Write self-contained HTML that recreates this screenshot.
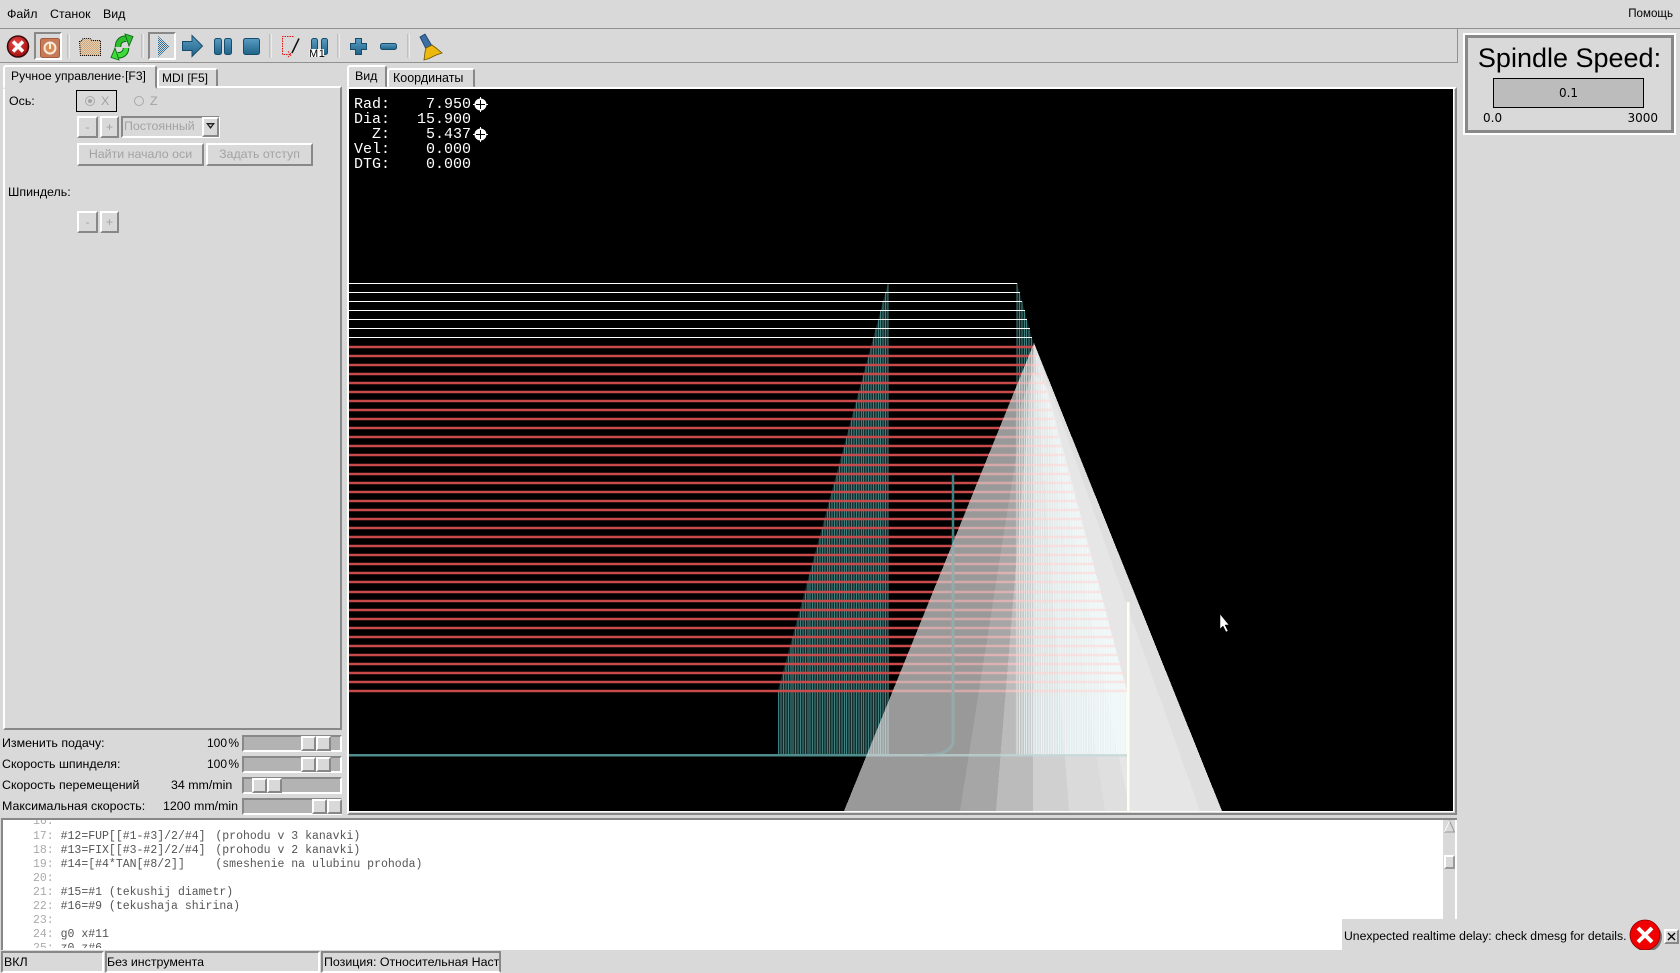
<!DOCTYPE html>
<html lang="ru"><head><meta charset="utf-8"><title>LinuxCNC</title>
<style>
html,body{margin:0;padding:0;background:#d9d9d9;width:1680px;height:973px;overflow:hidden}
body{position:relative;font:12.4px/14px "Liberation Sans",sans-serif;color:#000}
.a{position:absolute;white-space:pre;box-sizing:border-box}
.r{border:2px solid;border-color:#fff #888 #888 #fff;background:#d9d9d9}
.s{border:2px solid;border-color:#888 #fff #fff #888}
.d{color:#a3a3a3;text-align:center}
.t{background:#b3b3b3;border:2px solid;border-color:#888 #fff #fff #888}
.th{position:absolute;top:-1px;height:15px;width:15px;border:2px solid;border-color:#fff #888 #888 #fff;background:#d9d9d9;box-sizing:border-box}
.c{font:11.5px/14px "Liberation Mono",monospace;color:#555;left:30px}
.c i{font-style:normal;color:#aaa}
.c b{font-weight:normal;margin-left:-4px}
.dro{font:15px/15px "Liberation Mono",monospace;color:#fff;left:354px}
</style></head><body>

<!-- menu -->
<div class="a" style="left:7px;top:7px">Файл</div>
<div class="a" style="left:50px;top:7px">Станок</div>
<div class="a" style="left:103px;top:7px">Вид</div>
<div class="a" style="right:7px;top:7px;font-size:11.6px">Помощь</div>
<div class="a" style="left:0;top:28px;width:1680px;height:1px;background:#909090"></div>
<div class="a" style="left:0;top:62px;width:1458px;height:1px;background:#909090"></div>
<div class="a" style="left:1457px;top:29px;width:1px;height:34px;background:#909090"></div>

<!-- toolbar -->
<div class="a" style="left:34px;top:32px;width:28px;height:28px;border:2px solid;border-color:#888 #fff #fff #888"></div>
<div class="a" style="left:148px;top:32px;width:28px;height:28px;border:2px solid;border-color:#888 #fff #fff #888"></div>
<svg class="a" style="left:0;top:28px" width="460" height="36" viewBox="0 28 460 36">
<defs>
<pattern id="dt" width="2" height="2" patternUnits="userSpaceOnUse"><rect width="2" height="2" fill="#e2d2b8"/><rect width="1" height="1" fill="#cfa478"/><rect x="1" y="1" width="1" height="1" fill="#cfa478"/></pattern>
<pattern id="db" width="2" height="2" patternUnits="userSpaceOnUse"><rect width="2" height="2" fill="#d9d9d9"/><rect width="1" height="1" fill="#2f6f9a"/><rect x="1" y="1" width="1" height="1" fill="#2f6f9a"/></pattern>
<linearGradient id="bl" x1="0" y1="0" x2="0" y2="1"><stop offset="0" stop-color="#5a9cc2"/><stop offset="1" stop-color="#1f6389"/></linearGradient>
<radialGradient id="rd" cx=".4" cy=".35" r=".7"><stop offset="0" stop-color="#ea4a4a"/><stop offset="1" stop-color="#a00c0c"/></radialGradient>
</defs>
<g stroke="#a8a8a8" stroke-width="1"><path d="M68 34V58M142 34V58M270 34V58M338 34V58M408 34V58"/></g>
<g stroke="#fff" stroke-width="1"><path d="M69 34V58M143 34V58M271 34V58M339 34V58M409 34V58"/></g>
<circle cx="18" cy="46.500" r="10.500" fill="url(#rd)" stroke="#3a0a0a" stroke-width="1.500"/>
<path d="M13 41.500L23 51.500M23 41.500L13 51.500" stroke="#fff" stroke-width="3.500"/>
<rect x="40.500" y="38.500" width="19" height="19" rx="2" fill="#c67a58" stroke="#a55a3a"/>
<circle cx="50" cy="48" r="5.500" fill="#d98a4e" stroke="#f6ebe0" stroke-width="2"/>
<path d="M50 43V49" stroke="#f6ebe0" stroke-width="2"/>
<path d="M79.500 41.500H81L83 38.500H90L92 40.500H100.500V55.500H80.500Z" fill="url(#dt)" stroke="#000" stroke-width="1" stroke-dasharray="1 1"/>
<path d="M118 47C118 41 122 38 127 39" fill="none" stroke="#0d6a15" stroke-width="6.500"/>
<path d="M118 47C118 41 122 38 127 39" fill="none" stroke="#2fc02f" stroke-width="4.500"/>
<path d="M125 34L133 36.500L129 46Z" fill="#2fc02f" stroke="#0d6a15" stroke-width=".9"/>
<path d="M126 48C126 53 122 56 117 55" fill="none" stroke="#0d6a15" stroke-width="6.500"/>
<path d="M126 48C126 53 122 56 117 55" fill="none" stroke="#3edc38" stroke-width="4.500"/>
<path d="M119 60L111 57.500L115 48Z" fill="#3edc38" stroke="#0d6a15" stroke-width=".9"/>
<path d="M158 36L170 46.500L158 57Z" fill="url(#db)"/>
<path d="M182.500 41.500H192V35.500L202.500 46L192 56.500V50.500H182.500Z" fill="url(#bl)" stroke="#184c6c"/>
<rect x="214.500" y="38.500" width="7" height="16" rx="2" fill="url(#bl)" stroke="#184c6c"/>
<rect x="224.500" y="38.500" width="7" height="16" rx="2" fill="url(#bl)" stroke="#184c6c"/>
<rect x="243.500" y="38.500" width="16" height="16" rx="2" fill="url(#bl)" stroke="#184c6c"/>
<path d="M293.500 36.500H282.500V54.500H291M288 51.500L291.500 54.500L288 57" fill="none" stroke="#e01010" stroke-dasharray="1.500 1"/>
<path d="M299 38.500L292 53" stroke="#111" stroke-width="1.500"/>
<rect x="311.500" y="38.500" width="6" height="16" rx="2" fill="url(#bl)" stroke="#184c6c"/>
<rect x="321.500" y="38.500" width="6" height="16" rx="2" fill="url(#bl)" stroke="#184c6c"/>
<rect x="309" y="49" width="15" height="8" fill="#fff"/>
<text x="309" y="57" font-family="Liberation Sans" font-size="11" letter-spacing=".6" fill="#000">M1</text>
<path d="M355.500 38.500H361.500V43.500H366.500V49.500H361.500V54.500H355.500V49.500H350.500V43.500H355.500Z" fill="url(#bl)" stroke="#184c6c"/>
<rect x="380.500" y="43.500" width="16" height="6" rx="2" fill="url(#bl)" stroke="#184c6c"/>
<path d="M420 37L425 34L432 46L426 49Z" fill="#3a6ea5" stroke="#1c3c66" stroke-width=".8"/>
<path d="M426 48L432 45L436 48L442 53L435 55.500L429 58.500L424 60L425 52Z" fill="#edb90f" stroke="#6b5300" stroke-width=".8"/>
</svg>

<!-- left tabs -->
<div class="a" style="left:157px;top:68px;width:61px;height:20px;border:2px solid;border-color:#fff #888 transparent #fff;border-radius:3px 3px 0 0;padding:1px 0 0 3px;font-size:12px">MDI [F5]</div>
<div class="a r" style="left:3px;top:86px;width:339px;height:644px"></div>
<div class="a" style="left:3px;top:65px;width:154px;height:24px;background:#d9d9d9;border:2px solid;border-color:#fff #888 #d9d9d9 #fff;border-radius:3px 3px 0 0;padding:2px 0 0 6px;font-size:12.1px">Ручное управление·[F3]</div>

<!-- right tabs -->
<div class="a" style="left:387px;top:68px;width:88px;height:20px;border:2px solid;border-color:#fff #888 transparent #fff;border-radius:3px 3px 0 0;padding:1px 0 0 4px;font-size:12.5px">Координаты</div>
<div class="a" style="left:347px;top:65px;width:40px;height:23px;background:#d9d9d9;border:2px solid;border-color:#fff #888 #d9d9d9 #fff;border-radius:3px 3px 0 0;padding:2px 0 0 6px">Вид</div>

<!-- left controls -->
<div class="a" style="left:9px;top:94px">Ось:</div>
<div class="a" style="left:76px;top:90px;width:41px;height:22px;border:1px solid #000"></div>
<svg class="a" style="left:80px;top:94px" width="70" height="16" viewBox="80 94 70 16"><circle cx="90" cy="101" r="4.500" fill="#d9d9d9" stroke="#aaa"/><circle cx="90" cy="101" r="2" fill="#a3a3a3"/><circle cx="139" cy="101" r="4.500" fill="#d9d9d9" stroke="#aaa"/></svg>
<div class="a" style="left:101px;top:94px;color:#a3a3a3">X</div>
<div class="a" style="left:150px;top:94px;color:#a3a3a3">Z</div>
<div class="a r d" style="left:77px;top:116px;width:21px;height:22px;padding-top:2px">-</div>
<div class="a r d" style="left:100px;top:116px;width:19px;height:22px;padding-top:2px">+</div>
<div class="a" style="left:121px;top:116px;width:99px;height:22px;border:2px solid;border-color:#888 #fff #fff #888;color:#a3a3a3;padding:1px 0 0 1px">Постоянный</div>
<div class="a r" style="left:202px;top:117px;width:17px;height:20px"></div>
<svg class="a" style="left:205px;top:121px" width="12" height="10"><path d="M1 2H10L5.500 8Z" fill="#222"/><path d="M3.500 3.500H7.500L5.500 5.500Z" fill="#d9d9d9"/></svg>
<div class="a r d" style="left:77px;top:143px;width:127px;height:23px;padding-top:2px">Найти начало оси</div>
<div class="a r d" style="left:206px;top:143px;width:107px;height:23px;padding-top:2px">Задать отступ</div>
<div class="a" style="left:8px;top:185px">Шпиндель:</div>
<div class="a r d" style="left:77px;top:211px;width:21px;height:22px;padding-top:2px">-</div>
<div class="a r d" style="left:100px;top:211px;width:19px;height:22px;padding-top:2px">+</div>

<!-- sliders -->
<div class="a" style="left:2px;top:736px">Изменить подачу:</div>
<div class="a" style="right:1441px;top:736px;font-size:12px;word-spacing:-2px">100 %</div>
<div class="a t" style="left:242px;top:735px;width:100px;height:17px"><div class="th" style="left:57px"></div><div class="th" style="left:72px"></div></div>
<div class="a" style="left:2px;top:757px">Скорость шпинделя:</div>
<div class="a" style="right:1441px;top:757px;font-size:12px;word-spacing:-2px">100 %</div>
<div class="a t" style="left:242px;top:756px;width:100px;height:17px"><div class="th" style="left:57px"></div><div class="th" style="left:72px"></div></div>
<div class="a" style="left:2px;top:778px">Скорость перемещений</div>
<div class="a" style="left:171px;top:778px">34 mm/min</div>
<div class="a t" style="left:242px;top:777px;width:100px;height:17px"><div class="th" style="left:8px"></div><div class="th" style="left:23px"></div></div>
<div class="a" style="left:2px;top:799px">Максимальная скорость:</div>
<div class="a" style="left:163px;top:799px">1200 mm/min</div>
<div class="a t" style="left:242px;top:798px;width:100px;height:17px"><div class="th" style="left:68px"></div><div class="th" style="left:83px"></div></div>

<!-- canvas -->
<div class="a" style="left:347px;top:87px;width:1110px;height:728px;border:2px solid;border-color:#fff #888 #888 #fff"></div>
<div class="a" style="left:349px;top:89px;width:1105px;height:723px;background:#000;border-right:1px solid #fff;border-bottom:1px solid #fff"></div>
<svg class="a" style="left:349px;top:89px" width="1104" height="722" viewBox="349 89 1104 722" shape-rendering="crispEdges">
<defs>
<path id="rg" d="M1017 283V755M1019.400 292V755M1021.900 301V755M1024.300 310V755M1026.700 319V755M1029.200 328V755M1031.600 337V755M1034 346V755M1036.400 355V755M1038.900 364V755M1041.300 374V755M1043.700 383V755M1046.200 392V755M1048.600 401V755M1051 410V755M1053.500 419V755M1055.900 428V755M1058.300 437V755M1060.700 446V755M1063.200 455V755M1065.600 464V755M1068 473V755M1070.500 482V755M1072.900 491V755M1075.300 500V755M1077.800 509V755M1080.200 518V755M1082.600 527V755M1085 536V755M1087.500 545V755M1089.900 555V755M1092.300 564V755M1094.800 573V755M1097.200 582V755M1099.600 591V755M1102.100 600V755M1104.500 609V755M1106.900 618V755M1109.400 627V755M1111.800 636V755M1114.200 645V755M1116.600 654V755M1119.100 663V755M1121.500 672V755M1123.900 681V755M1126.400 690V755"/>
<path id="lg" d="M888 283V755M885.600 292V755M883.100 301V755M880.700 310V755M878.300 319V755M875.900 328V755M873.400 337V755M871 346V755M868.600 355V755M866.100 364V755M863.700 374V755M861.300 383V755M858.800 392V755M856.400 401V755M854 410V755M851.600 419V755M849.100 428V755M846.700 437V755M844.300 446V755M841.800 455V755M839.400 464V755M837 473V755M834.500 482V755M832.100 491V755M829.700 500V755M827.300 509V755M824.800 518V755M822.400 527V755M820 536V755M817.500 545V755M815.100 555V755M812.700 564V755M810.200 573V755M807.800 582V755M805.400 591V755M802.900 600V755M800.500 609V755M798.100 618V755M795.600 627V755M793.200 636V755M790.800 645V755M788.400 654V755M785.900 663V755M783.500 672V755M781.100 681V755M778.700 690V755"/>
<path id="red" d="M349 347H1035M349 356H1037M349 365H1040M349 374H1042M349 383H1045M349 392H1047M349 401H1050M349 410H1052M349 419H1054M349 428H1057M349 437H1059M349 446H1062M349 455H1064M349 465H1067M349 474H1069M349 483H1072M349 492H1074M349 501H1077M349 510H1079M349 519H1082M349 528H1084M349 537H1086M349 546H1089M349 555H1091M349 564H1094M349 573H1096M349 582H1099M349 592H1101M349 601H1104M349 610H1106M349 619H1109M349 628H1111M349 637H1113M349 646H1116M349 655H1118M349 664H1121M349 673H1123M349 682H1126M349 691H1127"/>
<clipPath id="cone"><path d="M1034 343L844 811H1222Z"/></clipPath>
<linearGradient id="glow" gradientUnits="userSpaceOnUse" x1="1015" y1="0" x2="1127" y2="0"><stop offset="0" stop-color="#fff" stop-opacity=".04"/><stop offset=".18" stop-color="#f6ffff" stop-opacity=".34"/><stop offset="1" stop-color="#f6ffff" stop-opacity=".62"/></linearGradient>
</defs>
<!-- dark fill beneath teal triangles -->
<path d="M888 283L778 690V755H889Z" fill="#152d2d"/>
<path d="M1017 283L1034 345L1017 400Z" fill="#102424"/>
<use href="#lg" stroke="#417f7f" stroke-width="1"/>
<use href="#rg" stroke="#417f7f" stroke-width="1"/>
<!-- white passes -->
<path d="M349 283.500H1017M349 292.500H1020M349 301.500H1022M349 310.500H1025M349 319.500H1027M349 328.500H1030M349 337.500H1032" stroke="#fff" stroke-width="1"/>
<!-- red passes -->
<use href="#red" stroke="#c84a4a" stroke-width="2.500" shape-rendering="auto"/>
<!-- baseline and tool line -->
<path d="M349 755H1127" stroke="#4f8c8c" stroke-width="2.500"/>
<path d="M953 474V740Q953 755 925 755" fill="none" stroke="#3f8080" stroke-width="2.500" shape-rendering="auto"/>
<!-- cone facets -->
<path d="M1034 343L844 811H960Z" fill="#c4c4c4" fill-opacity=".78"/>
<path d="M1034 343L960 811H996Z" fill="#d2d2d2" fill-opacity=".79"/>
<path d="M1034 343L996 811H1033Z" fill="#eaeaea" fill-opacity=".8"/>
<path d="M1034 343L1033 811H1069Z" fill="#f5f5f5" fill-opacity=".85"/>
<path d="M1034 343L1069 811H1105Z" fill="#f8f8f8" fill-opacity=".88"/>
<path d="M1034 343L1105 811H1130Z" fill="#fbfbfb" fill-opacity=".89"/>
<path d="M1034 343L1130 811H1200Z" fill="#fdfdfd" fill-opacity=".91"/>
<path d="M1034 343L1200 811H1222Z" fill="#fafafa" fill-opacity=".89"/>
<!-- glow inside the stair region -->
<g clip-path="url(#cone)">
<path d="M1033 372L1047 388L1127 691V755H1015V420Z" fill="url(#glow)"/>
<use href="#rg" stroke="#f2ffff" stroke-opacity=".4" stroke-width="1"/>
<use href="#lg" stroke="#fff" stroke-opacity=".2" stroke-width="1"/>
<use href="#red" stroke="#ffaaaa" stroke-opacity=".25" stroke-width="2.500" shape-rendering="auto"/>
<path d="M953 474V740Q953 755 925 755" fill="none" stroke="#93abab" stroke-width="2.500" shape-rendering="auto"/>
<path d="M844 755H1127" stroke="#b8cccc" stroke-opacity=".6" stroke-width="2.500"/>
</g>
<!-- end line -->
<path d="M1128 602V811" stroke="#fffff0" stroke-width="2.500"/>
<!-- cursor -->
<path d="M1220 614V629L1223 626L1226 632L1228 631L1225 625L1229 625Z" fill="#fff" stroke="#000" stroke-width=".5" shape-rendering="auto"/>
</svg>

<!-- DRO -->
<div class="a dro" style="top:97px">Rad:    7.950</div>
<div class="a dro" style="top:112px">Dia:   15.900</div>
<div class="a dro" style="top:127px">  Z:    5.437</div>
<div class="a dro" style="top:142px">Vel:    0.000</div>
<div class="a dro" style="top:157px">DTG:    0.000</div>
<svg class="a" style="left:473px;top:96.500px" width="15" height="46" viewBox="0 0 15 46"><g fill="#fff"><circle cx="7.500" cy="7.500" r="6"/><circle cx="7.500" cy="37.500" r="6"/></g><path d="M7.500 0V15M0 7.500H15M7.500 30V45M0 37.500H15" stroke="#fff"/><path d="M7.500 3V12M3 7.500H12M7.500 33V42M3 37.500H12" stroke="#000" stroke-width="1"/></svg>

<!-- spindle panel -->
<div class="a" style="left:1463px;top:33px;width:213px;height:102px;border:2px solid #fff"></div>
<div class="a" style="left:1465px;top:35px;width:209px;height:98px;border:3px solid #888"></div>
<div class="a" style="left:1463px;top:41px;width:213px;text-align:center;font-size:27px;line-height:34px">Spindle Speed:</div>
<div class="a" style="left:1493px;top:78px;width:151px;height:30px;background:#bcbcbc;border:1.500px solid #000;text-align:center;font:12px/29px 'DejaVu Sans',sans-serif">0.1</div>
<div class="a" style="left:1483px;top:111px;font:12px/14px 'DejaVu Sans',sans-serif">0.0</div>
<div class="a" style="right:22px;top:111px;font:12px/14px 'DejaVu Sans',sans-serif">3000</div>

<!-- text area -->
<div class="a" style="left:1px;top:818px;width:1456px;height:2px;background:#888"></div>
<div class="a" style="left:1px;top:818px;width:2px;height:133px;background:#888"></div>
<div class="a" style="left:3px;top:820px;width:1440px;height:130px;background:#fff;overflow:hidden">
<div class="a c" style="top:-5px"><i>16:</i></div>
<div class="a c" style="top:10px"><i>17:</i> #12=FUP[[#1-#3]/2/#4]  <b>(prohodu v 3 kanavki)</b></div>
<div class="a c" style="top:24px"><i>18:</i> #13=FIX[[#3-#2]/2/#4]  <b>(prohodu v 2 kanavki)</b></div>
<div class="a c" style="top:38px"><i>19:</i> #14=[#4*TAN[#8/2]]     <b>(smeshenie na ulubinu prohoda)</b></div>
<div class="a c" style="top:52px"><i>20:</i></div>
<div class="a c" style="top:66px"><i>21:</i> #15=#1 (tekushij diametr)</div>
<div class="a c" style="top:80px"><i>22:</i> #16=#9 (tekushaja shirina)</div>
<div class="a c" style="top:94px"><i>23:</i></div>
<div class="a c" style="top:108px"><i>24:</i> g0 x#11</div>
<div class="a c" style="top:122px;height:6px;overflow:hidden"><i>25:</i> z0 z#6</div>
</div>
<!-- scrollbar -->
<div class="a" style="left:1455px;top:820px;width:2px;height:99px;background:#fff"></div>
<svg class="a" style="left:1444px;top:820px" width="11" height="13"><path d="M5.500 1L10.500 12H.5Z" fill="#d9d9d9" stroke="#999"/><path d="M5.500 1L.5 12" stroke="#fff"/></svg>
<div class="a r" style="left:1444px;top:855px;width:11px;height:14px;border-color:#fff #999 #999 #fff"></div>

<!-- notification -->
<div class="a" style="left:1342px;top:919px;width:338px;height:31px;background:#d9d9d9"></div>
<div class="a" style="left:1344px;top:929px;font-size:12.2px">Unexpected realtime delay: check dmesg for details.</div>
<svg class="a" style="left:1628px;top:918px" width="36" height="36" viewBox="1628 918 36 36"><circle cx="1647" cy="937" r="15" fill="#777"/><circle cx="1645" cy="935" r="15" fill="#f00000" stroke="#800" stroke-width=".8"/><path d="M1638 928L1652 942M1652 928L1638 942" stroke="#fff" stroke-width="4"/></svg>
<div class="a r" style="left:1664px;top:929px;width:15px;height:15px"></div>
<svg class="a" style="left:1667px;top:932px" width="10" height="10"><path d="M1 1L8 8M8 1L1 8" stroke="#000" stroke-width="1.300"/></svg>

<!-- status bar -->
<div class="a" style="left:0;top:950px;width:1680px;height:23px;background:#d9d9d9"></div>
<div class="a s" style="left:1px;top:951px;width:103px;height:22px;padding:2px 0 0 1px">ВКЛ</div>
<div class="a s" style="left:105px;top:951px;width:215px;height:22px;padding:2px 0 0 0">Без инструмента</div>
<div class="a s" style="left:321px;top:951px;width:180px;height:22px;padding:2px 0 0 1px;overflow:hidden;border-top-color:#888;border-right-color:#888">Позиция: Относительная Наст</div>
</body></html>
